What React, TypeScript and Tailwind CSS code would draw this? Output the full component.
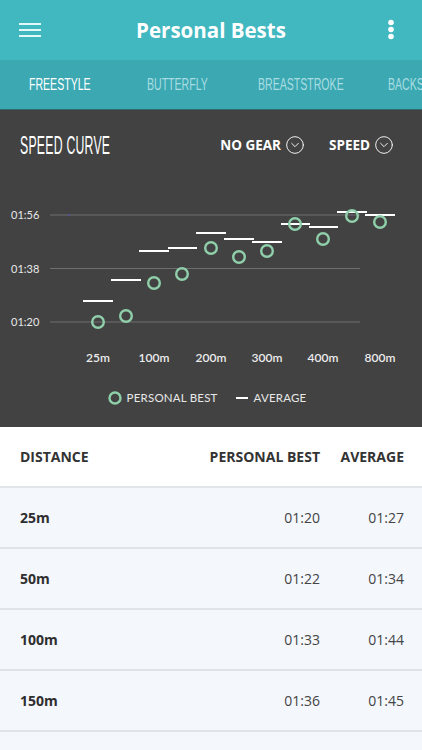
import React from "react";
import { CircleChevronDown } from "lucide-react";

const pts = [
  { cx: 98, cy: 322, x1: 83, x2: 113, ly: 301 },
  { cx: 126, cy: 316, x1: 111, x2: 141, ly: 280 },
  { cx: 154, cy: 283, x1: 139, x2: 169, ly: 251 },
  { cx: 182, cy: 274, x1: 168, x2: 197, ly: 248 },
  { cx: 211, cy: 248, x1: 196, x2: 226, ly: 233 },
  { cx: 239, cy: 257, x1: 224, x2: 254, ly: 239 },
  { cx: 267, cy: 251, x1: 252, x2: 282, ly: 242 },
  { cx: 295, cy: 224, x1: 281, x2: 310, ly: 224 },
  { cx: 323, cy: 239, x1: 309, x2: 338, ly: 227 },
  { cx: 352, cy: 216, x1: 337, x2: 367, ly: 212 },
  { cx: 380, cy: 222, x1: 365, x2: 395, ly: 215 },
];

const OY = 180;

const rows = [
  ["25m", "01:20", "01:27"],
  ["50m", "01:22", "01:34"],
  ["100m", "01:33", "01:44"],
  ["150m", "01:36", "01:45"],
];

const open = { fontFamily: '"Open Sans", "Noto Sans", sans-serif' };
const narrow = { fontFamily: '"Liberation Sans", "DejaVu Sans", sans-serif' };

export default function App() {
  return (
    <div className="w-[422px] h-[750px] overflow-hidden bg-[#f4f7fc]" style={open}>
      {/* Header */}
      <div className="h-[60px] bg-[#41b8c0] flex items-center justify-between px-[19px] relative">
        <svg width="22" height="16" viewBox="0 0 22 16" className="mt-[-1px]">
          <rect x="0" y="1" width="22" height="2" fill="#e3f8f9" />
          <rect x="0" y="7" width="22" height="2" fill="#e3f8f9" />
          <rect x="0" y="13" width="22" height="2" fill="#e3f8f9" />
        </svg>
        <div className="text-white font-bold text-[20.5px] ml-[-6px]">Personal Bests</div>
        <svg width="8" height="22" viewBox="0 0 8 22" className="mr-[8px]">
          <circle cx="4" cy="3.5" r="2.8" fill="#fff" />
          <circle cx="4" cy="10.5" r="2.8" fill="#fff" />
          <circle cx="4" cy="17.5" r="2.8" fill="#fff" />
        </svg>
      </div>
      {/* Tabs */}
      <div className="h-[50px] bg-[#3ba8b2] border-b border-[#2f6a70] flex items-center whitespace-nowrap overflow-hidden pl-[29px] text-[16px]" style={narrow}>
        <div className="w-[118px] shrink-0 text-white">
          <span className="inline-block scale-x-[0.66] origin-left">FREESTYLE</span>
        </div>
        <div className="w-[111px] shrink-0 text-[#a9dde2]">
          <span className="inline-block scale-x-[0.66] origin-left">BUTTERFLY</span>
        </div>
        <div className="w-[130px] shrink-0 text-[#a9dde2]">
          <span className="inline-block scale-x-[0.66] origin-left">BREASTSTROKE</span>
        </div>
        <div className="w-[34px] shrink-0 overflow-hidden text-[#a9dde2]">
          <span className="inline-block scale-x-[0.66] origin-left">BACKSTROKE</span>
        </div>
      </div>
      {/* Chart */}
      <div className="h-[317px] bg-[#424242] flex flex-col">
        <div className="h-[70px] shrink-0 flex items-center px-[20px]">
          <div className="flex-1">
            <div className="text-white text-[25px] leading-none scale-x-[0.49] origin-left whitespace-nowrap tracking-[0.5px]" style={narrow}>SPEED CURVE</div>
          </div>
          <div className="flex items-center gap-[4px] text-white font-bold text-[13.5px] mr-[24px]">
            <span>NO GEAR</span>
            <CircleChevronDown size={20} strokeWidth={1.1} />
          </div>
          <div className="flex items-center gap-[4px] text-white font-bold text-[13.5px] mr-[8px]">
            <span>SPEED</span>
            <CircleChevronDown size={20} strokeWidth={1.1} />
          </div>
        </div>
        <svg width="422" height="195" viewBox="0 0 422 195" className="shrink-0 block">
          {[215, 268.5, 322].map((y) => (
            <line key={y} x1="50" x2="360" y1={y - OY} y2={y - OY} stroke="#6e6e6e" strokeWidth="1" />
          ))}
          <rect x="68" y={214.5 - OY} width="2" height="1" fill="#5050d0" />
          {[
            ["01:56", 215],
            ["01:38", 268.5],
            ["01:20", 322],
          ].map(([t, y]) => (
            <text key={t as string} x="11" y={(y as number) - OY + 4} fill="#e8e8e8" fontSize="11" fontFamily="Lato, 'Open Sans', sans-serif">
              {t}
            </text>
          ))}
          {pts.map((p, i) => (
            <g key={i}>
              <line x1={p.x1} x2={p.x2} y1={p.ly - OY} y2={p.ly - OY} stroke="#ffffff" strokeWidth="2" />
              <circle cx={p.cx} cy={p.cy - OY} r="5.8" fill="none" stroke="#8fd0ab" strokeWidth="2.4" />
            </g>
          ))}
          {[
            ["25m", 98],
            ["100m", 154],
            ["200m", 211],
            ["300m", 267],
            ["400m", 323],
            ["800m", 380],
          ].map(([t, x]) => (
            <text key={t as string} x={x as number} y={182} textAnchor="middle" fill="#ececec" fontSize="12" fontWeight="600" fontFamily="Lato, 'Open Sans', sans-serif">
              {t}
            </text>
          ))}
        </svg>
        <div className="h-[46px] shrink-0 flex items-center justify-center text-[11.5px] text-[#e8e8e8] pr-[8px]" style={{ fontFamily: "Lato, 'Open Sans', sans-serif" }}>
          <svg width="14" height="14" viewBox="0 0 14 14" className="mr-[5px]">
            <circle cx="7" cy="7" r="5.5" fill="none" stroke="#8fd0ab" strokeWidth="2.4" />
          </svg>
          <span className="tracking-[0.2px]">PERSONAL BEST</span>
          <span className="ml-[18px] mr-[6px] w-[12px] h-[2px] bg-white inline-block" />
          <span className="tracking-[0.2px]">AVERAGE</span>
        </div>
      </div>
      {/* Table */}
      <div className="h-[61px] bg-white border-b-2 border-[#e2e5ea] flex items-center pl-[20px] pr-[18px] font-bold text-[14px] text-[#333]">
        <div className="flex-1">DISTANCE</div>
        <div className="text-right">PERSONAL BEST</div>
        <div className="w-[84px] text-right">AVERAGE</div>
      </div>
      {rows.map((r) => (
        <div key={r[0]} className="h-[61px] bg-[#f4f7fc] border-b-2 border-[#e0e3e8] flex items-center pl-[20px] pr-[18px] text-[14px]">
          <div className="flex-1 font-bold text-[#2e2e2e]">{r[0]}</div>
          <div className="text-right text-[#444]">{r[1]}</div>
          <div className="w-[84px] text-right text-[#444]">{r[2]}</div>
        </div>
      ))}
      <div className="h-[61px] bg-[#f4f7fc]" />
    </div>
  );
}
